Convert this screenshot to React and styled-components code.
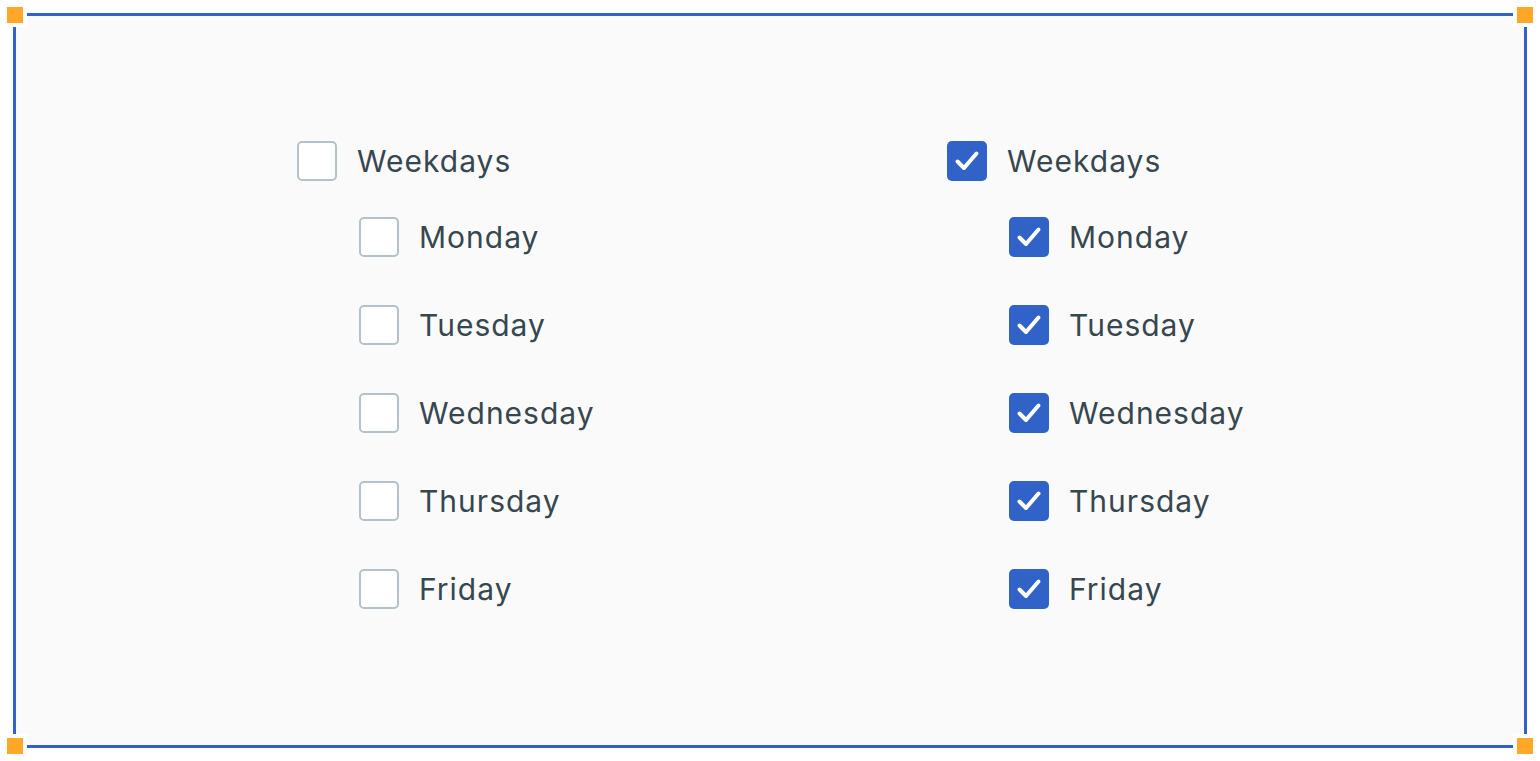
import React from "react";
import styled, { createGlobalStyle } from "styled-components";

const GlobalStyle = createGlobalStyle`
  html, body {
    margin: 0;
    padding: 0;
    background: #ffffff;
  }
  body {
    font-family: Inter, "Noto Sans", sans-serif;
  }
`;

const days = ["Monday", "Tuesday", "Wednesday", "Thursday", "Friday"];

const CheckIcon = () => (
  <svg width="40" height="40" viewBox="0 0 40 40" fill="none">
    <path
      d="M10.5 20.5 L17 27 L29.5 12.5"
      stroke="#ffffff"
      strokeWidth="4"
      strokeLinecap="round"
      strokeLinejoin="round"
    />
  </svg>
);

const Checkbox = ({ checked }) => (
  <Box $checked={checked}>{checked && <CheckIcon />}</Box>
);

const Group = ({ checked }) => (
  <Column>
    <Row>
      <Checkbox checked={checked} />
      <Label>Weekdays</Label>
    </Row>
    <Children>
      {days.map(day => (
        <Row key={day}>
          <Checkbox checked={checked} />
          <Label>{day}</Label>
        </Row>
      ))}
    </Children>
  </Column>
);

const App = () => {
  return (
    <Page>
      <GlobalStyle />
      <Frame>
        <Handle $v="top" $h="left" />
        <Handle $v="top" $h="right" />
        <Handle $v="bottom" $h="left" />
        <Handle $v="bottom" $h="right" />
        <Columns>
          <Group checked={false} />
          <Group checked={true} />
        </Columns>
      </Frame>
    </Page>
  );
};

export default App;

const Page = styled.div`
  box-sizing: border-box;
  height: 100vh;
  padding: 13px;
`;

const Frame = styled.div`
  position: relative;
  box-sizing: border-box;
  height: 100%;
  border: 3px solid #3062c8;
  background: #fafafa;
  padding-top: 125px;
`;

const Handle = styled.span`
  position: absolute;
  width: 16px;
  height: 16px;
  background: #ffa726;
  box-shadow: 0 0 0 4px #ffffff;
  ${p => p.$v}: -9px;
  ${p => p.$h}: -9px;
`;

const Columns = styled.div`
  display: grid;
  grid-template-columns: 298px 298px;
  column-gap: 352px;
  justify-content: center;
  margin-left: 2px;
`;

const Column = styled.div`
  display: flex;
  flex-direction: column;
`;

const Children = styled.div`
  display: flex;
  flex-direction: column;
  gap: 48px;
  margin-top: 36px;
  padding-left: 62px;
`;

const Row = styled.div`
  display: flex;
  align-items: center;
  gap: 20px;
  height: 40px;
`;

const Box = styled.div`
  box-sizing: border-box;
  flex: none;
  width: 40px;
  height: 40px;
  border-radius: 5px;
  border: ${p => (p.$checked ? "none" : "2px solid #b4c2ca")};
  background: ${p => (p.$checked ? "#3062c8" : "#ffffff")};
  display: flex;
  align-items: center;
  justify-content: center;
`;

const Label = styled.span`
  font-size: 30px;
  letter-spacing: 1px;
  color: #37474f;
  white-space: nowrap;
  line-height: 40px;
`;
